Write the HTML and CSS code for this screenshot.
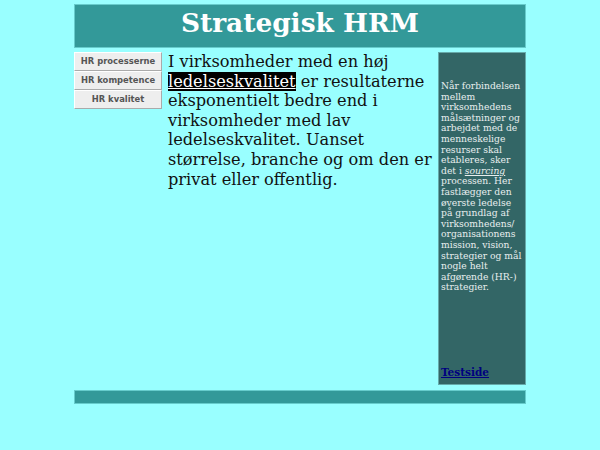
FILE: index.html
```html
<!DOCTYPE html>
<html>
<head>
<meta charset="utf-8">
<link rel="stylesheet" href="styles.css">
</head>
<body>
<div class="page">
  <div class="header"><h1 class="title">Strategisk HRM</h1></div>
  <div class="columns">
    <div class="nav">
      <a class="btn" href="#">HR processerne</a>
      <a class="btn" href="#">HR kompetence</a>
      <a class="btn" href="#">HR kvalitet</a>
    </div>
    <div class="main">
      <p class="lead">I virksomheder med en høj <a class="hl" href="#">ledelseskvalitet</a> er resultaterne eksponentielt bedre end i virksomheder med lav ledelseskvalitet. Uanset størrelse, branche og om den er privat eller offentlig.</p>
    </div>
    <div class="side">
      <p class="side-text">Når forbindelsen mellem virksomhedens målsætninger og arbejdet med de menneskelige resurser skal etableres, sker det i <u><i>sourcing</i></u> processen. Her fastlægger den øverste ledelse på grundlag af virksomhedens/ organisationens mission, vision, strategier og mål nogle helt afgørende (HR-) strategier.</p>
      <a class="test" href="#">Testside</a>
    </div>
  </div>
  <div class="footer"></div>
</div>
</body>
</html>
```
FILE: styles.css
```css
html, body {
  margin: 0;
  padding: 0;
  background: #99ffff;
}
body {
  font-family: "DejaVu Serif", serif;
}
.page {
  width: 452px;
  margin: 4px auto 0;
}
.header {
  background: #339999;
  border: 1px solid #66cccc;
  height: 42px;
  display: flex;
  justify-content: center;
  align-items: center;
}
.title {
  margin: 0;
  color: #ffffff;
  font-family: "DejaVu Serif", serif;
  font-weight: bold;
  font-size: 26.4px;
  line-height: 30px;
  padding-bottom: 6px;
}
.columns {
  display: flex;
  margin-top: 4px;
  height: 333px;
}
.nav {
  width: 88px;
  display: flex;
  flex-direction: column;
  flex: none;
}
.btn {
  display: block;
  height: 17px;
  line-height: 17px;
  background: #eeeeee;
  border-top: 1px solid #ffffff;
  border-left: 1px solid #ffffff;
  border-right: 1px solid #aaaaaa;
  border-bottom: 1px solid #aaaaaa;
  text-align: center;
  font-family: "DejaVu Sans", sans-serif;
  font-weight: bold;
  font-size: 8.4px;
  color: #555555;
  text-decoration: none;
}
.main {
  flex: 1;
  padding: 0 4px 0 6px;
}
.lead {
  margin: 0;
  font-size: 16.2px;
  line-height: 19.6px;
  color: #111111;
}
.hl {
  background: #000000;
  color: #ffffff;
  text-decoration: underline;
}
.side {
  width: 88px;
  flex: none;
  background: #336666;
  border: 1px solid #66aaaa;
  box-sizing: border-box;
  padding: 28px 0 6px 2px;
  display: flex;
  flex-direction: column;
}
.side-text {
  margin: 0;
  font-size: 9.2px;
  line-height: 10.6px;
  color: #e8eeee;
}
.test {
  margin-top: auto;
  font-size: 10.5px;
  font-weight: bold;
  color: #000080;
  text-decoration: underline;
}
.footer {
  margin-top: 5px;
  height: 12px;
  background: #339999;
  border: 1px solid #66cccc;
}
```
